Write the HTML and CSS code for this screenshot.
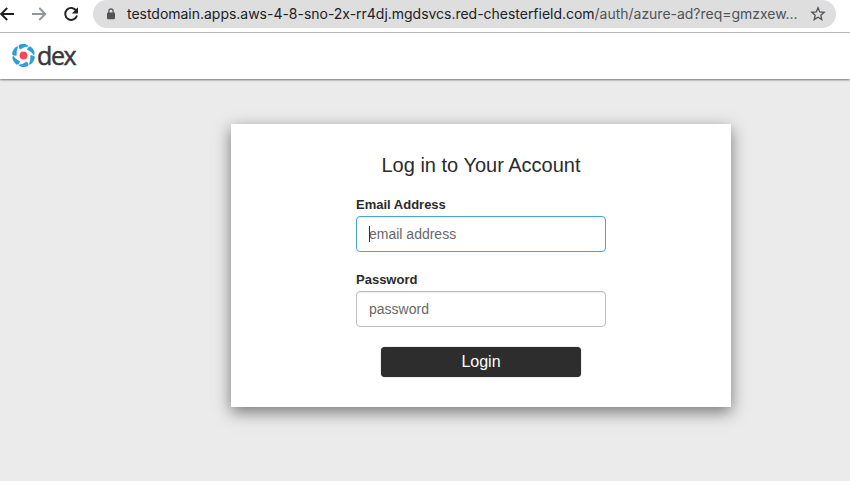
FILE: index.html
```html
<!DOCTYPE html>
<html lang="en">
<head>
<meta charset="utf-8">
<title>dex</title>
<link rel="stylesheet" href="styles.css">
</head>
<body>
<div class="toolbar">
  <svg class="nav-icons" width="93" height="32" viewBox="0 0 93 32" fill="none" stroke-width="1.9">
    <path d="M14 14H1.5M7.2 8L1.2 14l6 6" stroke="#202124"/>
    <path d="M32 14h12.5M39.3 8l6 6-6 6" stroke="#949699"/>
    <path d="M76.3 10.7A6 6 0 1 0 77 15.6" stroke="#202124"/>
    <path d="M78 7.3v6.2h-6.2z" fill="#202124"/>
  </svg>
  <div class="address">
    <svg class="lock" width="10" height="12" viewBox="0 0 10 12">
      <rect x="1" y="4.4" width="8" height="6.9" rx="1" fill="#505357"/>
      <path d="M2.9 5V3a2.1 2.1 0 0 1 4.2 0v2" fill="none" stroke="#505357" stroke-width="1.2"/>
    </svg>
    <div class="url"><span class="host">testdomain.apps.aws-4-8-sno-2x-rr4dj.mgdsvcs.red-chesterfield.com</span><span class="path">/auth/azure-ad?req=gmzxew...</span></div>
    <svg class="star" width="16" height="16" viewBox="0 0 16 16">
      <path d="M8 1.8l1.7 4.1 4.5.4-3.4 2.9 1 4.4L8 11.3l-3.8 2.3 1-4.4-3.4-2.9 4.5-.4z" fill="none" stroke="#505357" stroke-width="1.3"/>
    </svg>
  </div>
</div>
<header class="navbar">
  <svg class="mark" width="24" height="24" viewBox="-11.5 -11.5 24 24">
    <g fill="#2b9fd9">
      <path id="blade" d="M-4.6-10.6A11.6 11.6 0 0 1 2.4-11.3Q4-10.6 5.3-9.2Q.5-8.8-3.4-5.9Q-5.3-7.6-4.6-10.6z"/>
      <use href="#blade" transform="rotate(60)"/>
      <use href="#blade" transform="rotate(120)"/>
      <use href="#blade" transform="rotate(180)"/>
      <use href="#blade" transform="rotate(240)"/>
      <use href="#blade" transform="rotate(300)"/>
    </g>
    <circle r="3.9" fill="#f94654"/>
  </svg>
  <span class="brand">dex</span>
</header>
<main class="content">
  <section class="panel">
    <h2 class="heading">Log in to Your Account</h2>
    <form class="form">
      <label class="label" for="login">Email Address</label>
      <div class="field field-active"><i class="caret"></i><input class="input" id="login" type="text" placeholder="email address"></div>
      <label class="label" for="password">Password</label>
      <div class="field"><input class="input" id="password" type="password" placeholder="password"></div>
      <button class="submit" type="button">Login</button>
    </form>
  </section>
</main>
</body>
</html>
```
FILE: styles.css
```css
* { box-sizing: border-box; }
body {
  margin: 0;
  height: 481px;
  overflow: hidden;
  display: flex;
  flex-direction: column;
  background: #ebebeb;
  color: #2b2b2b;
  font-family: "Liberation Sans", Arial, sans-serif;
}
.toolbar {
  height: 33px;
  flex: none;
  display: flex;
  align-items: flex-start;
  background: #fff;
  border-bottom: 1px solid #bdbdbd;
}
.nav-icons { flex: none; }
.address {
  width: 743px;
  height: 28px;
  display: flex;
  align-items: center;
  padding-left: 13px;
  background: #dedede;
  border-radius: 14px;
}
.lock { margin-right: 11px; }
.url {
  width: 671px;
  display: flex;
  font: 14px/28px Inter, sans-serif;
  letter-spacing: -0.02px;
  white-space: nowrap;
}
.host { color: #202124; }
.path { color: #505357; }
.star { margin-left: 12px; }
.navbar {
  height: 46px;
  flex: none;
  display: flex;
  align-items: flex-start;
  padding: 11px 0 0 12px;
  background: #fff;
  box-shadow: 0 1px 2px rgba(0, 0, 0, 0.5);
}
.brand {
  margin-left: 1px;
  font: 25px/22px "Open Sans", sans-serif;
  letter-spacing: -1.4px;
  color: #383838;
  -webkit-text-stroke: 0.5px #383838;
}
.content { padding-top: 45px; padding-left: 231px; }
.panel {
  width: 500px;
  height: 283px;
  padding-top: 29px;
  background: #fff;
  box-shadow: 0 5px 15px rgba(0, 0, 0, 0.5);
}
.heading {
  margin: 0 0 20px;
  font-size: 20px;
  line-height: 24px;
  font-weight: 400;
  text-align: center;
}
.form {
  width: 250px;
  margin: 0 auto;
  display: flex;
  flex-direction: column;
}
.label { font-size: 13px; line-height: 16px; font-weight: 700; margin-bottom: 3px; }
.field {
  position: relative;
  height: 36px;
  margin-bottom: 20px;
  border: 1px solid #bfbfbf;
  border-radius: 4px;
  box-shadow: inset 0 1px 1px rgba(0, 0, 0, 0.08);
}
.field-active { border-color: #4aa3dc; }
.input {
  width: 100%;
  height: 34px;
  padding: 0 12px;
  border: 0;
  outline: 0;
  background: transparent;
  font: 14px "Liberation Sans", Arial, sans-serif;
}
.input::placeholder { color: #686868; }
.caret {
  position: absolute;
  left: 12px;
  top: 9px;
  width: 1px;
  height: 16px;
  background: #333;
}
.submit {
  width: 200px;
  height: 30px;
  margin: 0 auto;
  padding: 0;
  border: 0;
  border-radius: 4px;
  background: #2d2d2d;
  box-shadow: 0 0 1px #555;
  color: #fff;
  font: 16px/30px "Liberation Sans", Arial, sans-serif;
}
```
